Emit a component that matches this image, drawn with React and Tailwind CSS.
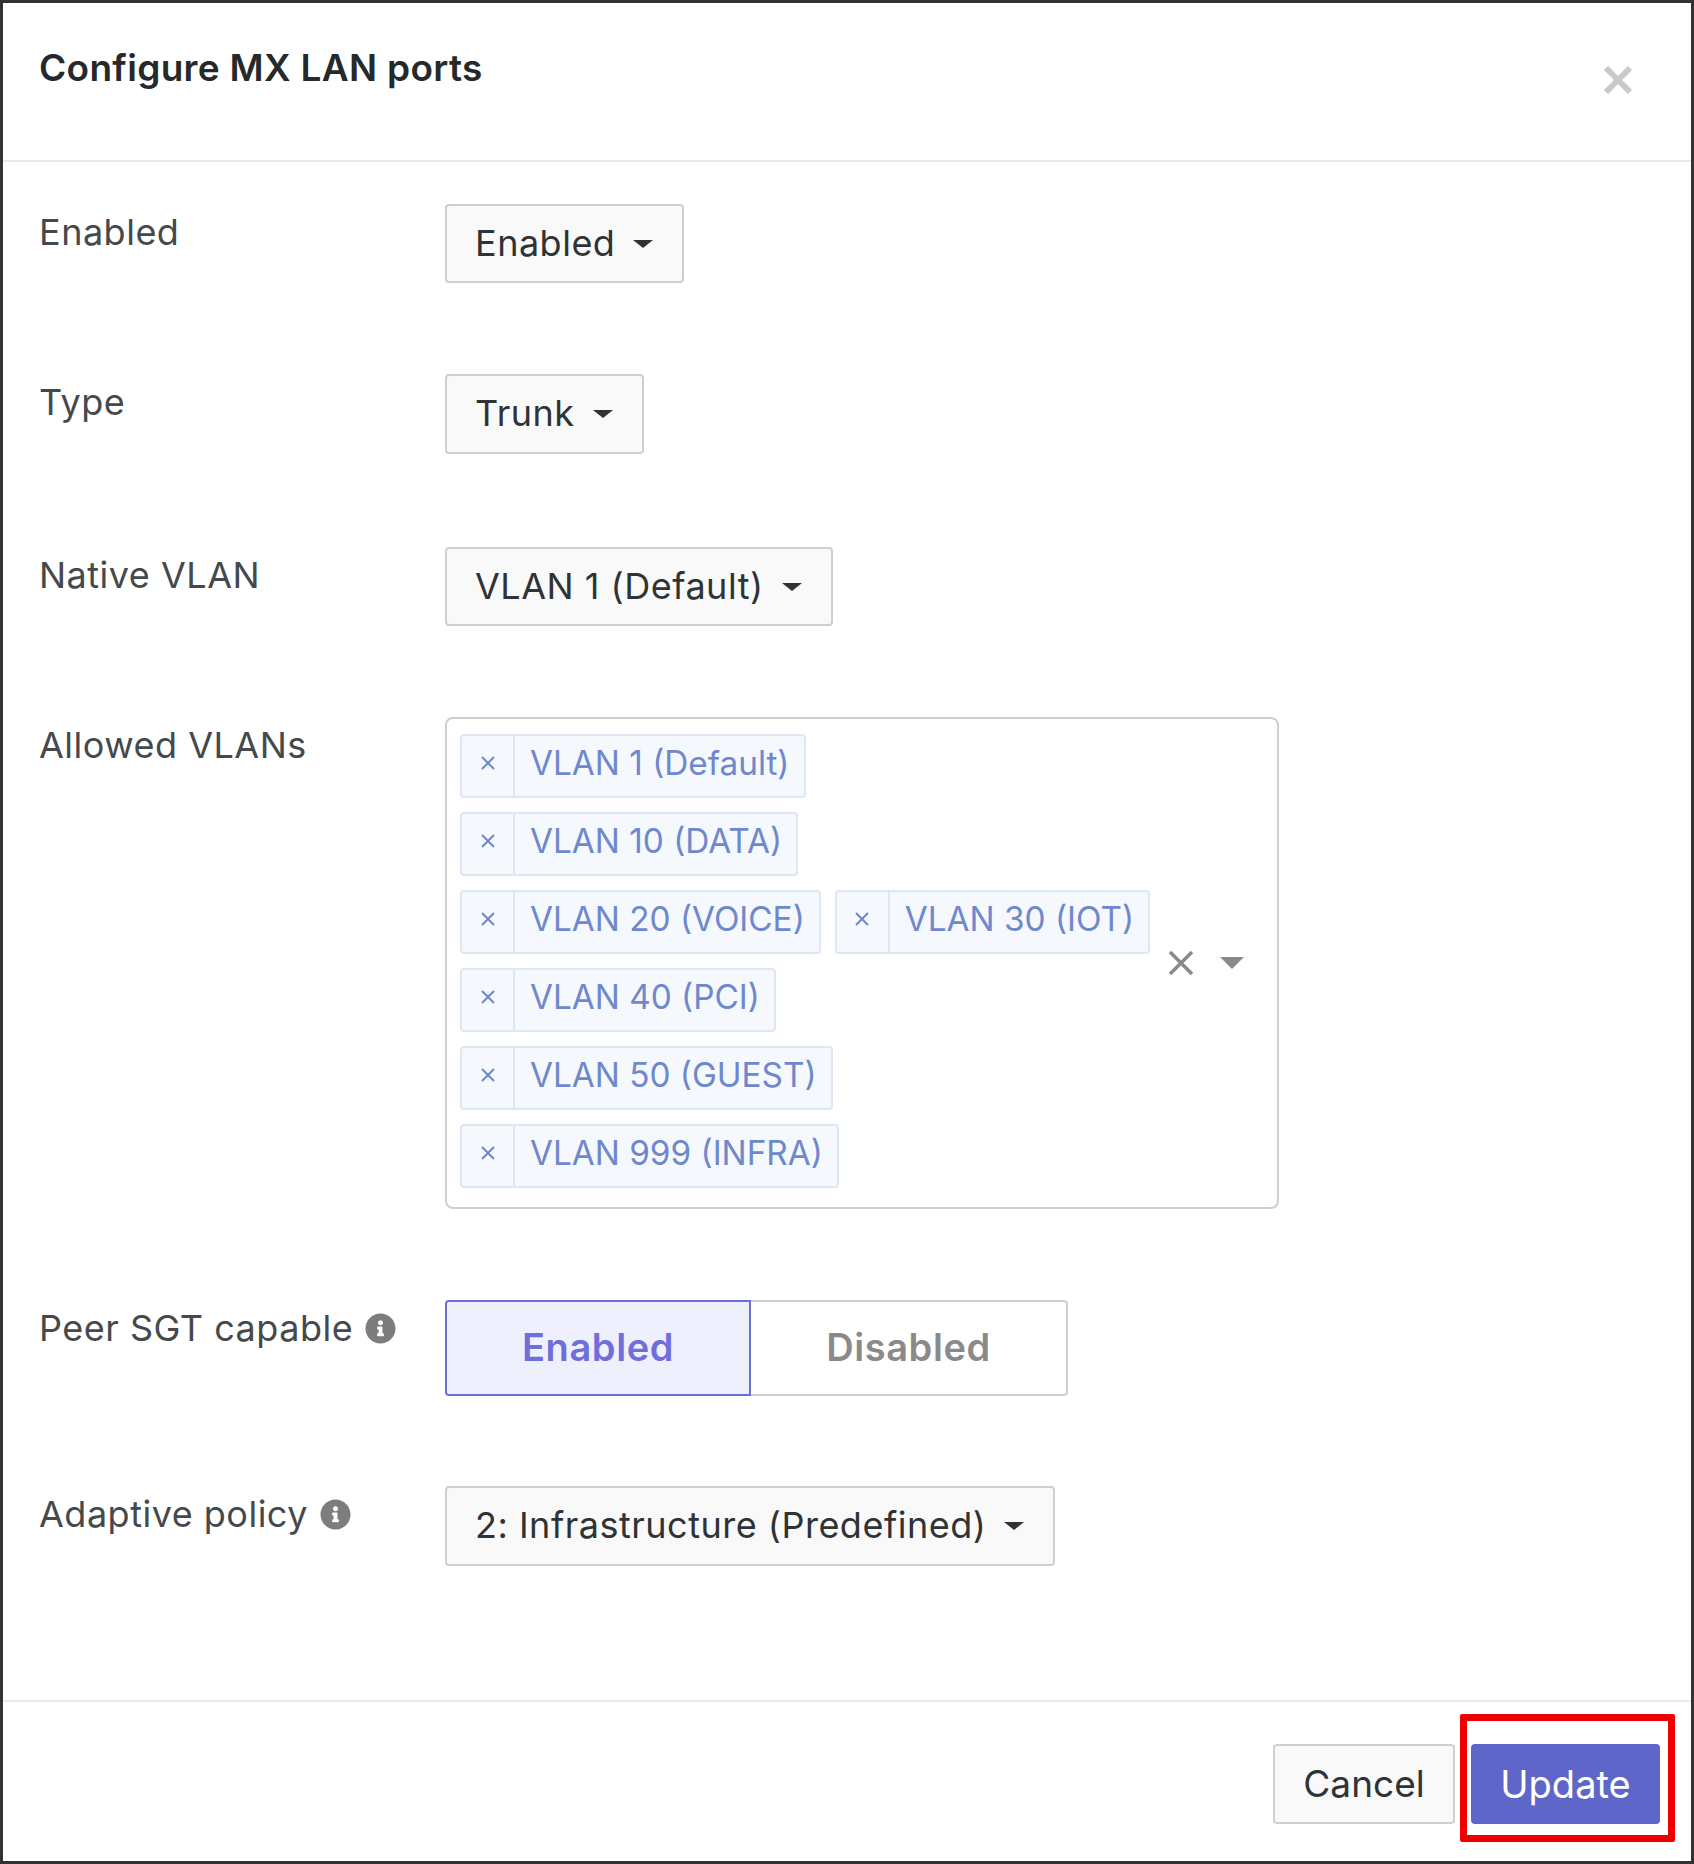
import React from 'react';
import { FaInfoCircle } from 'react-icons/fa';

const TAGS = [
  ['VLAN 1 (Default)'],
  ['VLAN 10 (DATA)'],
  ['VLAN 20 (VOICE)', 'VLAN 30 (IOT)'],
  ['VLAN 40 (PCI)'],
  ['VLAN 50 (GUEST)'],
  ['VLAN 999 (INFRA)'],
];

const Caret = () => (
  <span className="inline-block w-0 h-0 ml-[18px] mt-[2px] border-x-[10px] border-x-transparent border-t-[8px] border-t-[#333]" />
);

const Dropdown = ({ label, className = 'h-[79px]' }) => (
  <button className={`flex items-center pl-[28px] pr-[29px] pb-[2px] bg-[#f9f9f9] border-2 border-[#cfcfcf] rounded-[4px] text-[36px] text-[#2f3336] tracking-[0.5px] whitespace-nowrap ${className}`}>
    {label}
    <Caret />
  </button>
);

const Row = ({ label, info, className = '', children }) => (
  <div className={`flex items-start ${className}`}>
    <div className="w-[442px] shrink-0 pl-[36px] pt-[6px] flex items-center gap-[12px] text-[36px] leading-[44px] text-[#45494c] tracking-[0.5px]">
      {label}
      {info && <FaInfoCircle className="w-[31px] h-[31px] text-[#7d7d7d]" />}
    </div>
    {children}
  </div>
);

const Tag = ({ label }) => (
  <div className="flex h-[64px] bg-[#f5f8fc] border-2 border-[#dfe7f2] rounded-[4px] text-[#6f88cc] text-[33.3px]">
    <span className="flex items-center justify-center w-[53px] pb-[5px] border-r-2 border-[#dfe7f2] shrink-0">
      <svg width="16" height="16" viewBox="0 0 16 16" stroke="#6f88cc" strokeWidth="2">
        <path d="M2 2l12 12M14 2L2 14" />
      </svg>
    </span>
    <span className="flex items-center pl-[15px] pr-[14px] pb-[3px] whitespace-nowrap">{label}</span>
  </div>
);

export default function App() {
  return (
    <div className="relative w-[1694px] h-[1864px] bg-white border-[3px] border-[#333] font-['Inter',sans-serif] flex flex-col">
      {/* Header */}
      <div className="flex justify-between h-[159px] border-b-2 border-[#e8e8e8] shrink-0">
        <h1 className="pl-[36px] pt-[43px] text-[37px] leading-[44px] font-semibold text-[#26292b] tracking-[0.3px]">Configure MX LAN ports</h1>
        <svg className="mt-[62px] mr-[58px]" width="30" height="30" viewBox="0 0 30 30" stroke="#c9c9c9" strokeWidth="6">
          <path d="M3 3l24 24M27 3L3 27" />
        </svg>
      </div>

      {/* Form */}
      <div className="flex-1 pt-[42px]">
        <Row label="Enabled">
          <Dropdown label="Enabled" />
        </Row>
        <Row label="Type" className="mt-[91px]">
          <Dropdown label="Trunk" className="h-[80px]" />
        </Row>
        <Row label="Native VLAN" className="mt-[93px]">
          <Dropdown label="VLAN 1 (Default)" />
        </Row>

        <Row label="Allowed VLANs" className="mt-[91px]">
          <div className="flex items-center w-[834px] h-[492px] pl-[13px] pr-[33px] border-2 border-[#cfcfcf] rounded-[8px]">
            <div className="flex-1 flex flex-col gap-[14px] mb-[5px]">
              {TAGS.map((row) => (
                <div key={row[0]} className="flex gap-[14px]">
                  {row.map((tag) => <Tag key={tag} label={tag} />)}
                </div>
              ))}
            </div>
            <svg width="26" height="26" viewBox="0 0 26 26" stroke="#8a8a8a" strokeWidth="3.5">
              <path d="M2 2l22 22M24 2L2 24" />
            </svg>
            <span className="inline-block w-0 h-0 ml-[26px] border-x-[12px] border-x-transparent border-t-[12px] border-t-[#8a8a8a]" />
          </div>
        </Row>

        <Row label="Peer SGT capable" info className="mt-[91px]">
          <div className="flex h-[96px] text-[38px] font-semibold tracking-[0.6px]">
            <div className="flex items-center justify-center w-[306px] pb-[2px] bg-[#eef1fd] border-2 border-[#6a70d6] rounded-l-[4px] text-[#6f6fdc]">Enabled</div>
            <div className="flex items-center justify-center w-[317px] pb-[2px] border-2 border-l-0 border-[#cfcfcf] rounded-r-[4px] text-[#8a8a8a]">Disabled</div>
          </div>
        </Row>

        <Row label="Adaptive policy" info className="mt-[90px]">
          <Dropdown label="2: Infrastructure (Predefined)" className="h-[80px]" />
        </Row>
      </div>

      {/* Footer */}
      <div className="flex justify-end items-start gap-[16px] h-[161px] pt-[42px] pr-[31px] border-t-2 border-[#e8e8e8] shrink-0">
        <button className="w-[182px] h-[80px] bg-[#f9f9f9] border-2 border-[#cfcfcf] rounded-[4px] text-[37px] text-[#2f3336]">Cancel</button>
        <button className="w-[189px] h-[80px] bg-[#5f66c9] rounded-[4px] text-[38px] text-white">Update</button>
      </div>

      {/* Red highlight drawn over the screenshot */}
      <div className="absolute left-[1457px] top-[1711px] w-[215px] h-[128px] border-[7px] border-[#ee0000] rounded-[2px]" />
    </div>
  );
}
